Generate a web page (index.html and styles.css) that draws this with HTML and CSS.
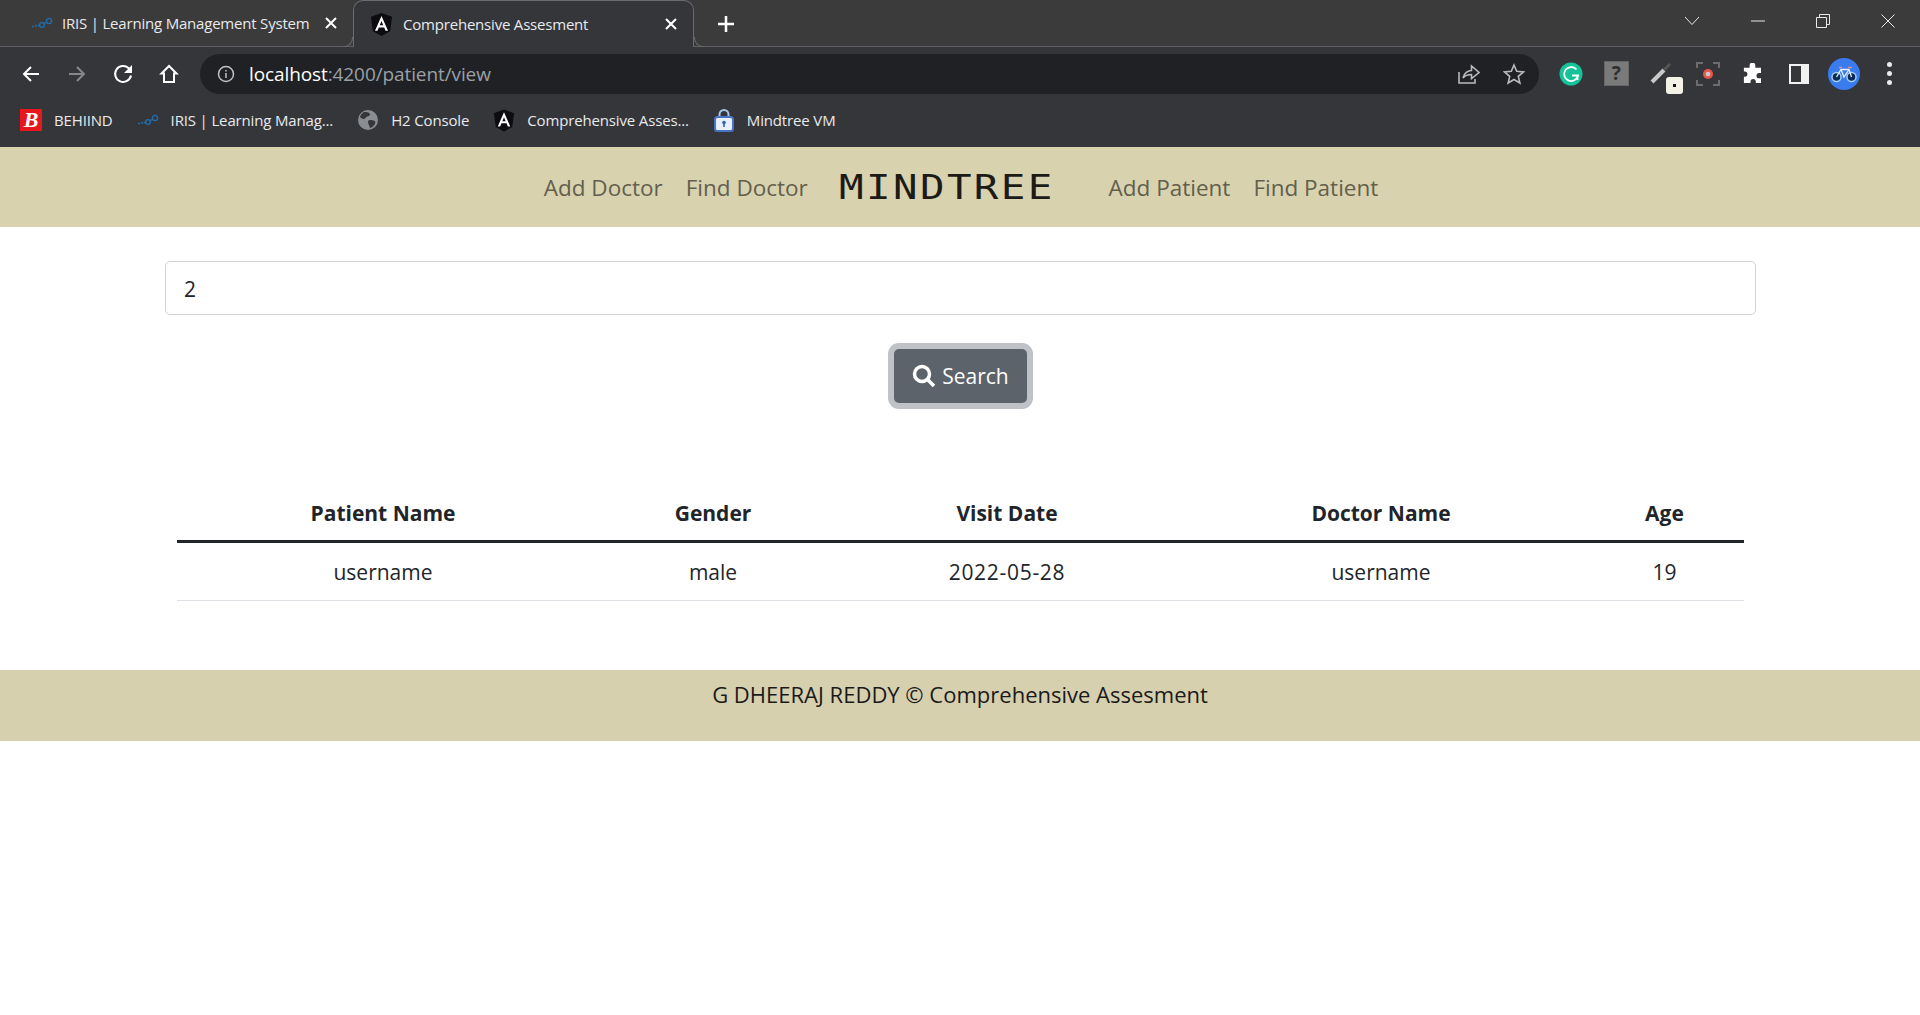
FILE: index.html
```html
<!DOCTYPE html>
<html lang="en">
<head>
    <meta charset="UTF-8">
    <meta name="viewport" content="width=device-width, initial-scale=1.0">
    <title>Comprehensive Assesment</title>
    <link rel="stylesheet" href="styles.css">
</head>
<body>
    <svg class="icon-defs" width="0" height="0">
        <symbol id="angular" viewBox="0 0 24 24">
            <path fill="#0c0c10" d="M12 0 23 4 21 19 12 24 3 19 1 4z"/>
            <path fill="#fff" d="M12 3 5.2 18.5h2.6l1.4-3.5h5.6l1.4 3.5h2.6zM10.2 12.8 12 8.4l1.8 4.4z"/>
        </symbol>
        <symbol id="iris" viewBox="0 0 22 12">
            <g fill="none" stroke="#1f6fb0" stroke-width="1.3">
                <circle cx="11" cy="8" r="2.4"/>
                <circle cx="18" cy="4" r="2.6"/>
                <path d="M13 6.8 15.8 5.2M8.6 8.5H6.8"/>
            </g>
            <circle cx="2" cy="9.5" r="1" fill="#1f6fb0"/>
            <circle cx="5" cy="8.8" r="1" fill="#1f6fb0"/>
        </symbol>
    </svg>

    <div class="browser">
        <div class="tabstrip">
            <div class="tab">
                <svg class="tab-icon" width="22" height="12"><use href="#iris"/></svg>
                <span class="tab-title">IRIS | Learning Management System</span>
                <svg class="tab-close" width="12" height="12" viewBox="0 0 12 12"><path d="M1 1 11 11M11 1 1 11"/></svg>
            </div>
            <div class="tab tab-active">
                <svg class="tab-icon" width="23" height="23"><use href="#angular"/></svg>
                <span class="tab-title">Comprehensive Assesment</span>
                <svg class="tab-close" width="12" height="12" viewBox="0 0 12 12"><path d="M1 1 11 11M11 1 1 11"/></svg>
            </div>
            <svg class="new-tab" width="18" height="18" viewBox="0 0 18 18"><path d="M9 1V17M1 9H17"/></svg>
            <div class="window-controls">
                <svg width="16" height="10" viewBox="0 0 16 10"><path d="M1 1 8 8.500 15 1"/></svg>
                <svg width="14" height="2" viewBox="0 0 14 2"><path d="M0 1H14"/></svg>
                <svg width="14" height="14" viewBox="0 0 14 14"><path d="M.5 3.500H10.500V13.500H.5zM3.500 3.500V.5H13.500V10.500H10.500"/></svg>
                <svg width="14" height="14" viewBox="0 0 14 14"><path d="M.5 .5 13.500 13.500M13.500 .5 .5 13.500"/></svg>
            </div>
        </div>

        <div class="toolbar">
            <div class="nav-buttons">
                <svg width="20" height="20" viewBox="0 0 20 20"><path class="line-white" d="M18 10H3M10 3 3 10 10 17"/></svg>
                <svg width="20" height="20" viewBox="0 0 20 20"><path class="line-dim" d="M2 10H17M10 3 17 10 10 17"/></svg>
                <svg width="20" height="20" viewBox="0 0 20 20"><path class="line-white" d="M18 11.500A8 8 0 1 1 15.500 4L18 6.500"/><path class="fill-white" d="M19 1V9H11z"/></svg>
                <svg width="20" height="20" viewBox="0 0 20 20"><path class="line-white" d="M10 2 2.500 9.500H5V18H15V9.500H17.500z"/></svg>
            </div>
            <div class="address-bar">
                <svg class="info-icon" width="18" height="18" viewBox="0 0 18 18"><circle cx="9" cy="9" r="7.500"/><path d="M9 8V13M9 5V6.500"/></svg>
                <span class="url"><span class="url-host">localhost</span>:4200/patient/view</span>
                <svg class="addr-action" width="22" height="20" viewBox="0 0 22 20"><path d="M1 8V19H17V15M5 14C6 9 10 6.500 13.500 6.500V2L21 8.500 13.500 14.500V10.500C10 10.500 7 11.500 5 14z"/></svg>
                <svg class="addr-action" width="22" height="22" viewBox="0 0 22 22"><path d="M11 2 13.700 8.300 20.500 8.900 15.300 13.400 16.900 20 11 16.500 5.100 20 6.700 13.400 1.500 8.900 8.300 8.300z"/></svg>
            </div>
            <div class="extensions">
                <span class="ext"><svg width="24" height="24" viewBox="0 0 24 24"><circle cx="12" cy="12" r="11.500" fill="#15c39a"/><path d="M17.500 7.500A7 7 0 1 0 19 13.500H13" fill="none" stroke="#fff" stroke-width="1.800"/><path d="M18.500 13.500V18" stroke="#fff" stroke-width="1.800"/></svg></span>
                <span class="ext"><span class="ext-help">?</span></span>
                <span class="ext ext-pen">
                    <svg width="24" height="24" viewBox="0 0 24 24"><path d="M2 20 14 8" stroke="#c9c9c9" stroke-width="4"/><path d="M14 8 20 2" stroke="#555" stroke-width="3"/></svg>
                    <span class="pen-badge"></span>
                </span>
                <span class="ext"><svg width="24" height="24" viewBox="0 0 24 24"><path d="M1 6V1H7M17 1H23V6M23 18V23H17M7 23H1V18" fill="none" stroke="#6c6c6c" stroke-width="2"/><circle cx="12" cy="12" r="5" fill="#e8564a"/><circle cx="12" cy="12" r="2.300" fill="#c9c9c9"/></svg></span>
                <span class="ext"><svg width="22" height="22" viewBox="0 0 22 22"><path fill="#fff" d="M8 1.500a3 3 0 0 1 6 0V4h6v5.500h-2a2.700 2.700 0 0 0 0 5.500h2V20H14.500v-2a2.800 2.800 0 0 0-5.500 0v2H2v-6.500h1.500a2.800 2.800 0 0 0 0-5.500H2V4h6z" transform="translate(0 1) scale(.95)"/></svg></span>
                <span class="ext"><span class="ext-panel"></span></span>
                <span class="ext"><span class="avatar"><svg width="28" height="18" viewBox="0 0 28 18"><circle cx="6.500" cy="12" r="4.500" fill="#0b2a55" stroke="#9fd0f5" stroke-width="1.500"/><circle cx="21.500" cy="12" r="4.500" fill="#0b2a55" stroke="#9fd0f5" stroke-width="1.500"/><path d="M6.500 12 11 4.500H19L21.500 12M11 4.500 14 12 19 4.500" fill="none" stroke="#e6eefa" stroke-width="1.300"/><path d="M9 2.500H12M18 2.500H22" stroke="#ef8a7a" stroke-width="1.600"/></svg></span></span>
                <span class="ext"><span class="dots"><i></i><i></i><i></i></span></span>
            </div>
        </div>

        <div class="bookmarks">
            <div class="bookmark"><span class="bm-behiind">B</span><span class="bm-text">BEHIIND</span></div>
            <div class="bookmark"><svg width="22" height="12"><use href="#iris"/></svg><span class="bm-text">IRIS | Learning Manag...</span></div>
            <div class="bookmark"><svg width="22" height="22" viewBox="0 0 22 22"><circle cx="11" cy="11" r="10" fill="#8a8d91"/><path fill="#35363a" d="M7 3C10 3 13 3.500 13 5.500 13 7.500 9.500 7 8.500 9 7.500 11 4 9.500 3 8 3.500 6 5 4 7 3zM11.500 11.500C14 10.500 18 11.500 18.500 13 18 16 15.500 18.500 13 19 12.500 16 10 14 11.500 11.500z"/></svg><span class="bm-text">H2 Console</span></div>
            <div class="bookmark"><svg width="22" height="23"><use href="#angular"/></svg><span class="bm-text">Comprehensive Asses...</span></div>
            <div class="bookmark"><svg width="22" height="24" viewBox="0 0 22 24"><path d="M6.500 10V6.500a4.500 4.500 0 0 1 9 0V10" fill="none" stroke="#a9c4ee" stroke-width="2"/><rect x="2" y="9" width="18" height="14" rx="2.500" fill="#e8f0fc" stroke="#4a74c4" stroke-width="2"/><circle cx="11" cy="14.500" r="1.800" fill="#2f5fb8"/><path d="M11 15V19" stroke="#2f5fb8" stroke-width="1.600"/></svg><span class="bm-text">Mindtree VM</span></div>
        </div>
    </div>

    <nav class="topnav">
        <a class="nav-link" href="#">Add Doctor</a>
        <a class="nav-link" href="#">Find Doctor</a>
        <span class="brand">MINDTREE</span>
        <a class="nav-link" href="#">Add Patient</a>
        <a class="nav-link" href="#">Find Patient</a>
    </nav>

    <main class="content">
        <input class="search-input" type="text" value="2">
        <div class="search-row">
            <button class="search-btn">
                <svg width="24" height="24" viewBox="0 0 24 24"><circle cx="10" cy="10" r="7.500"/><path d="M15.500 15.500 22 22"/></svg>
                Search
            </button>
        </div>
        <table class="patients">
            <thead>
                <tr>
                    <th class="col-name">Patient Name</th>
                    <th class="col-gender">Gender</th>
                    <th class="col-date">Visit Date</th>
                    <th class="col-doctor">Doctor Name</th>
                    <th class="col-age">Age</th>
                </tr>
            </thead>
            <tbody>
                <tr>
                    <td>username</td>
                    <td>male</td>
                    <td class="cell-date">2022-05-28</td>
                    <td>username</td>
                    <td>19</td>
                </tr>
            </tbody>
        </table>
    </main>

    <footer class="footer">G DHEERAJ REDDY © Comprehensive Assesment</footer>
</body>
</html>
```

FILE: styles.css
```css
body {
    margin: 0;
    background-color: #fff;
    color: #212529;
    font-family: "Open Sans", "Noto Sans", sans-serif;
}
.icon-defs {
    position: absolute;
}

/* browser chrome */
.browser {
    background-color: #35363a;
    color: #e8eaed;
}
.tabstrip {
    display: flex;
    align-items: flex-start;
    height: 46px;
    background-color: #3b3b3b;
    border-bottom: 1px solid #5f6063;
}
.tab {
    display: flex;
    align-items: center;
    box-sizing: border-box;
    width: 353px;
    height: 46px;
    padding: 0 16px 0 31px;
    font-size: 15px;
    letter-spacing: -0.2px;
}
.tab-icon {
    flex: none;
    margin-right: 9px;
}
.tab-title {
    flex: 1;
    white-space: nowrap;
}
.tab-close {
    flex: none;
    fill: none;
    stroke: #fff;
    stroke-width: 2;
}
.tab-active {
    position: relative;
    width: 341px;
    height: 47px;
    padding: 0 16px 0 16px;
    background-color: #35363a;
    border: 1px solid #6a6b6e;
    border-bottom: none;
    border-radius: 10px 10px 0 0;
}
.tab-active .tab-icon {
    margin-right: 10px;
}
.tab-active::before,
.tab-active::after {
    content: "";
    position: absolute;
    bottom: 0;
    width: 9px;
    height: 9px;
    background-color: #3b3b3b;
    border-bottom: 1px solid #6a6b6e;
}
.tab-active::before {
    left: -11px;
    border-right: 1px solid #6a6b6e;
    border-bottom-right-radius: 9px;
}
.tab-active::after {
    right: -11px;
    border-left: 1px solid #6a6b6e;
    border-bottom-left-radius: 9px;
}
.new-tab {
    margin: 15px 0 0 23px;
    fill: none;
    stroke: #fff;
    stroke-width: 2.500;
}
.window-controls {
    display: flex;
    align-items: center;
    gap: 51px;
    height: 42px;
    margin-left: auto;
    padding-right: 25px;
}
.window-controls svg {
    fill: none;
    stroke: #e8e8e8;
    stroke-width: 1;
}
.toolbar {
    display: flex;
    align-items: center;
    height: 53px;
}
.nav-buttons {
    display: flex;
    gap: 26px;
    width: 200px;
    box-sizing: border-box;
    padding-left: 21px;
}
.nav-buttons svg {
    fill: none;
    stroke-width: 2;
}
.line-white {
    stroke: #fff;
}
.line-dim {
    stroke: #85878a;
}
.fill-white {
    fill: #fff;
}
.address-bar {
    display: flex;
    align-items: center;
    box-sizing: border-box;
    width: 1339px;
    height: 40px;
    padding: 0 14px 0 17px;
    background-color: #202124;
    border-radius: 20px;
}
.info-icon {
    fill: none;
    stroke: #bdc1c6;
    stroke-width: 1.500;
}
.url {
    flex: 1;
    margin-left: 14px;
    font-size: 19px;
    letter-spacing: -0.1px;
    color: #9aa0a6;
}
.url-host {
    color: #fff;
}
.addr-action {
    margin-left: 23px;
    fill: none;
    stroke: #b8babd;
    stroke-width: 1.600;
}
.extensions {
    display: flex;
    margin-left: 9px;
}
.ext {
    position: relative;
    display: flex;
    align-items: center;
    justify-content: center;
    width: 45.600px;
    height: 34px;
}
.ext-help {
    width: 23px;
    height: 23px;
    background-color: #7a7a7a;
    border: 1px solid #666;
    color: #2f2f2f;
    font-size: 19px;
    font-weight: 700;
    line-height: 22px;
    text-align: center;
}
.pen-badge {
    position: absolute;
    right: 2px;
    bottom: -3px;
    width: 17px;
    height: 17px;
    background: #f4f1e6 radial-gradient(circle, #111 0, #111 1.500px, transparent 2px);
    border-radius: 3px;
}
.ext-panel {
    box-sizing: border-box;
    width: 20px;
    height: 20px;
    background-color: #35363a;
    border: solid #f1f1f1;
    border-width: 2px 8px 2px 2px;
}
.avatar {
    display: flex;
    align-items: center;
    justify-content: center;
    width: 32px;
    height: 32px;
    background-color: #3a7cf0;
    border-radius: 50%;
}
.dots {
    display: flex;
    flex-direction: column;
    gap: 4px;
}
.dots i {
    display: block;
    width: 5px;
    height: 5px;
    background-color: #e8eaed;
    border-radius: 50%;
}
.bookmarks {
    display: flex;
    align-items: center;
    gap: 24px;
    box-sizing: border-box;
    height: 47px;
    padding: 0 0 7px 20px;
}
.bookmark {
    display: flex;
    align-items: center;
    gap: 12px;
}
.bm-behiind {
    width: 22px;
    height: 22px;
    background-color: #e8161d;
    color: #fff;
    font-family: "Liberation Serif", serif;
    font-size: 22px;
    font-weight: 700;
    font-style: italic;
    line-height: 22px;
    text-align: center;
}
.bm-text {
    font-size: 15px;
    letter-spacing: -0.15px;
    white-space: nowrap;
}

/* page */
.topnav {
    display: flex;
    align-items: center;
    justify-content: center;
    gap: 23px;
    box-sizing: border-box;
    height: 80px;
    padding-left: 2px;
    background-color: #d9d2ae;
}
.nav-link {
    color: #625f4e;
    font-size: 22.500px;
    text-decoration: none;
}
.brand {
    margin: 0 49px 0 26px;
    color: #1c1b16;
    font-family: "DejaVu Sans Mono", monospace;
    font-size: 34px;
    letter-spacing: 2px;
    transform: scaleX(1.2);
}
.content {
    padding: 34px 164px 69px 165px;
}
.search-input {
    display: block;
    box-sizing: border-box;
    width: 100%;
    height: 54px;
    padding: 1px 18px 0;
    border: 1px solid #ced4da;
    border-radius: 5px;
    color: #212529;
    font-family: inherit;
    font-size: 21px;
}
.search-row {
    display: flex;
    justify-content: center;
    margin-top: 34px;
}
.search-btn {
    display: flex;
    align-items: center;
    justify-content: center;
    gap: 6px;
    width: 133px;
    height: 54px;
    padding: 0;
    background-color: #5c636a;
    border: none;
    border-radius: 5px;
    box-shadow: 0 0 0 6px #bfc2c6;
    color: #fff;
    font-family: inherit;
    font-size: 21px;
}
.search-btn svg {
    fill: none;
    stroke: #fff;
    stroke-width: 3.500;
}
.patients {
    width: 1567px;
    margin: 87px 0 0 12px;
    border-collapse: collapse;
    table-layout: fixed;
    font-size: 21px;
    text-align: center;
}
.patients th {
    box-sizing: border-box;
    padding: 6px 8px 10px;
    border-bottom: 3px solid #212529;
    line-height: 34px;
}
.patients td {
    padding: 13px 8px 11px;
    border-bottom: 1px solid #dee2e6;
    line-height: 33px;
}
.patients .cell-date {
    letter-spacing: 0.7px;
}
.col-name {
    width: 412px;
}
.col-gender {
    width: 248px;
}
.col-date {
    width: 340px;
}
.col-doctor {
    width: 408px;
}
.col-age {
    width: 159px;
}
.footer {
    box-sizing: border-box;
    height: 71px;
    padding-top: 10px;
    background-color: #d7d0ae;
    color: #1a1a1a;
    font-size: 22px;
    line-height: 28px;
    text-align: center;
}
```
